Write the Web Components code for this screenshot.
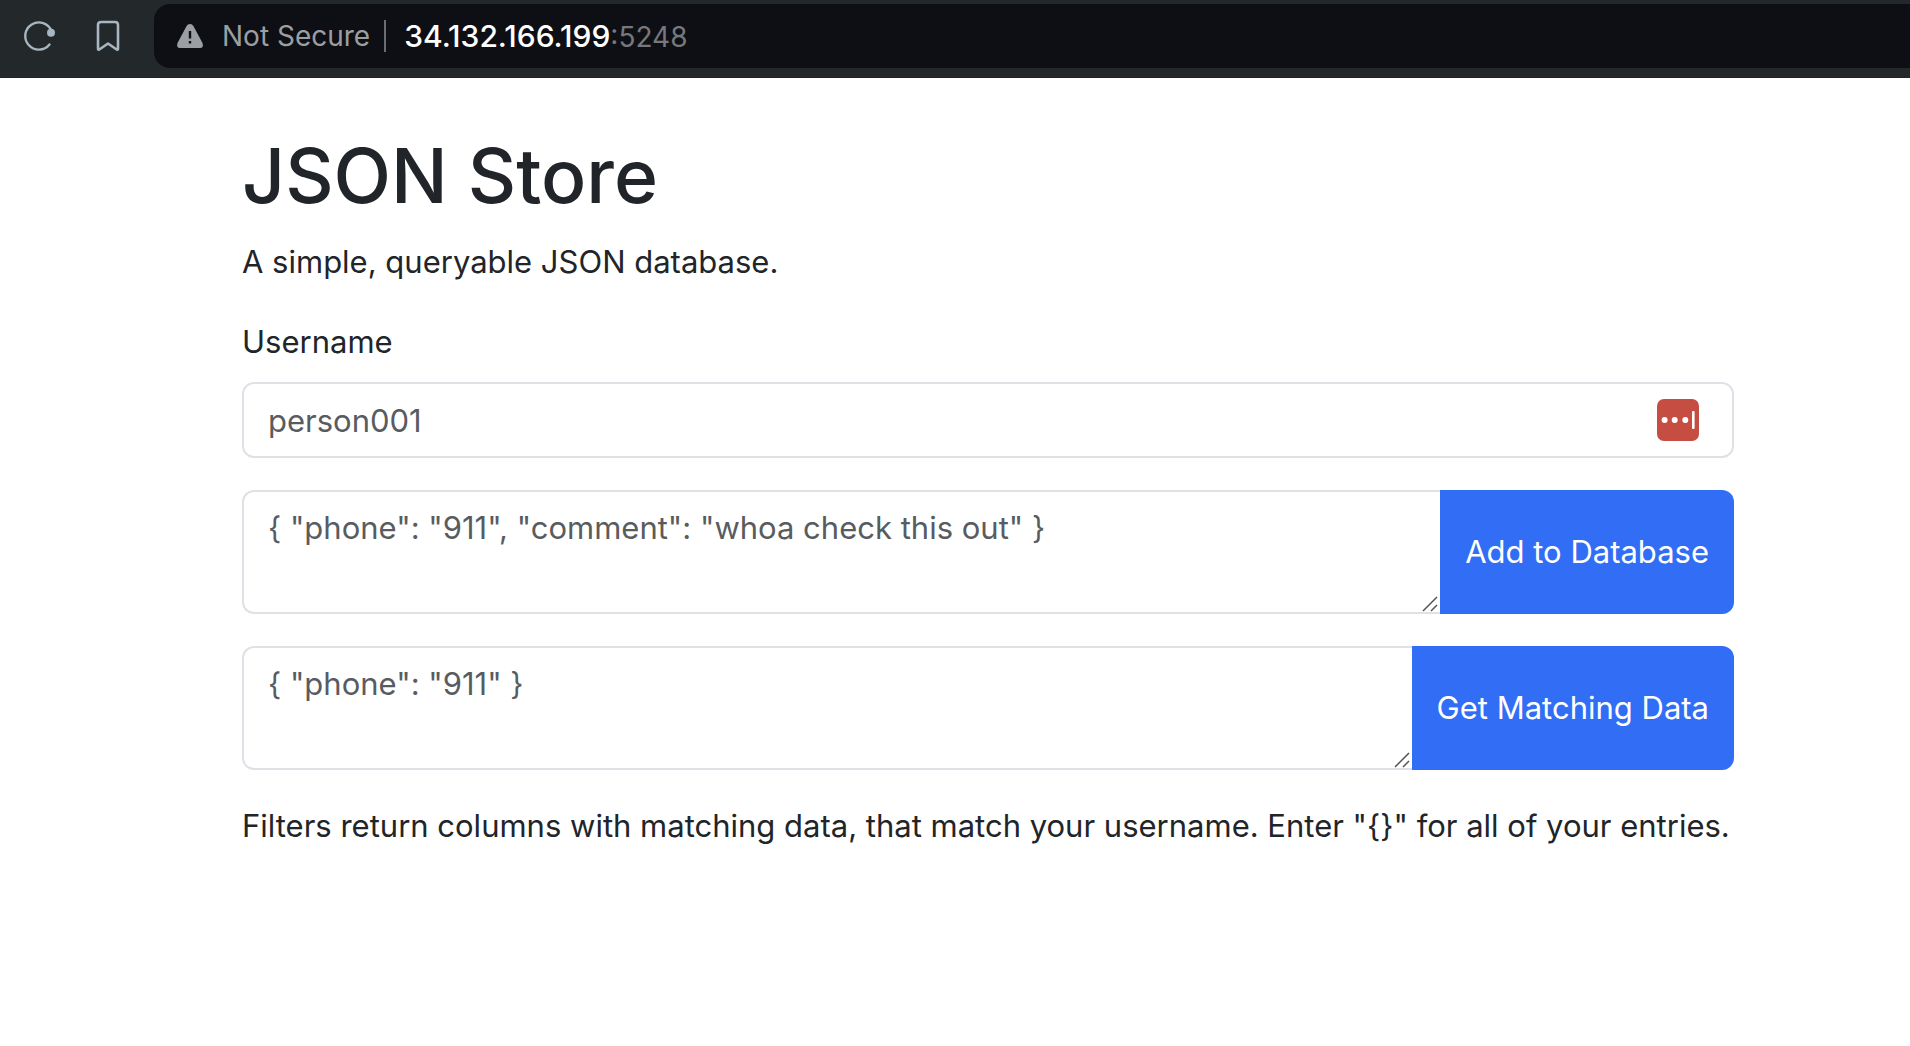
<!DOCTYPE html>
<html lang="en">
<head>
<meta charset="utf-8">
<title>JSON Store</title>
<style>
  body { margin: 0; background: #fff; color: #212529; font: 400 31px/48px Inter, "Liberation Sans", sans-serif; }
</style>
</head>
<body>
<browser-bar host="34.132.166.199" port=":5248"></browser-bar>
<json-store>
  <h1 slot="title">JSON Store</h1>
  <p slot="lead">A simple, queryable JSON database.</p>
  <user-field label="Username" placeholder="person001"></user-field>
  <json-form name="Data" action-label="Add to Database" placeholder='{ "phone": "911", "comment": "whoa check this out" }'></json-form>
  <json-form name="Filter" action-label="Get Matching Data" placeholder='{ "phone": "911" }'></json-form>
  <p slot="note">Filters return columns with matching data, that match your username. Enter "{}" for all of your entries.</p>
</json-store>
<script>
class BrowserBar extends HTMLElement {
  constructor() {
    super();
    this.attachShadow({ mode: "open" }).innerHTML = `
      <style>
        :host { display: flex; align-items: flex-start; box-sizing: border-box; height: 78px; padding-top: 4px; background: #23282b; border-bottom: 1px solid #1f2426; font-size: 28px; line-height: 64px; white-space: nowrap; }
        nav { display: flex; align-items: center; height: 64px; padding-left: 22px; gap: 36px; width: 132px; }
        button { display: block; border: 0; padding: 0; margin: 0; background: none; color: #a7b6c0; height: 36px; }
        svg { display: block; }
        .address { flex: 1; display: flex; align-items: center; height: 64px; padding-left: 20px; background: #0e0f14; border-radius: 16px 0 0 16px; color: #fff; }
        .state { display: flex; align-items: center; gap: 16px; color: #9b9fa2; }
        .rule { width: 2px; height: 32px; margin: 0 18px 0 14px; background: #6b6d71; }
        .url { display: flex; align-items: baseline; }
        .host { font-size: 30px; font-weight: 500; }
        .port { color: #77787c; }
      </style>
      <nav>
        <button aria-label="Reload"><svg width="36" height="36" viewBox="0 0 36 36" fill="none" stroke="currentColor" stroke-width="2.4" stroke-linecap="round"><path d="M27.5 26.5A13.6 13.6 0 1 1 29.500 13"/><circle cx="29" cy="14.800" r="4" fill="currentColor" stroke="none"/></svg></button>
        <button aria-label="Bookmark"><svg width="28" height="36" viewBox="0 0 28 36" fill="none" stroke="currentColor" stroke-width="2.6" stroke-linejoin="round"><path d="M7 4H21Q24 4 24 7V30.500Q24 32.500 22.300 31.300L14 25.500L5.700 31.300Q4 32.500 4 30.500V7Q4 4 7 4Z"/></svg></button>
      </nav>
      <div class="address">
        <span class="state"><svg width="32" height="32" viewBox="0 0 32 32"><path fill="currentColor" d="M16 4Q18.300 4 19.400 6L28.500 23Q30 28 26 28H6Q2 28 3.500 23L12.600 6Q13.700 4 16 4Z"/><path stroke="#0e0f14" stroke-width="2.400" d="M16 11V18.500M16 21V23.400"/></svg><span>Not Secure</span></span>
        <span class="rule"></span><span class="url"><span class="host"></span><span class="port"></span></span>
      </div>`;
    this.shadowRoot.querySelector(".host").textContent = this.getAttribute("host");
    this.shadowRoot.querySelector(".port").textContent = this.getAttribute("port");
  }
}

class JsonStore extends HTMLElement {
  constructor() {
    super();
    this.attachShadow({ mode: "open" }).innerHTML = `
      <style>
        :host { display: block; padding: 48px 176px 48px 242px; }
        main { display: flex; flex-direction: column; gap: 32px; }
        header { display: flex; flex-direction: column; gap: 12px; }
        ::slotted(h1) { margin: 0; font-size: 75px; line-height: 100px; font-weight: 500; }
        ::slotted(p) { margin: 0; }
      </style>
      <main>
        <header><slot name="title"></slot><slot name="lead"></slot></header>
        <slot></slot>
        <slot name="note"></slot>
      </main>`;
  }
}

class UserField extends HTMLElement {
  constructor() {
    super();
    this.attachShadow({ mode: "open" }).innerHTML = `
      <style>
        :host { display: flex; flex-direction: column; gap: 16px; }
        .box { position: relative; display: flex; }
        input { flex: 1; min-width: 0; box-sizing: border-box; height: 76px; margin: 0; padding: 12px 24px; border: 2px solid #dee2e6; border-radius: 12px; background: #fff; font: inherit; color: inherit; outline: 0; }
        input::placeholder { color: #595c5f; opacity: 1; }
        .vault { position: absolute; right: 35px; top: 17px; width: 42px; height: 42px; padding: 0; border: 0; background: none; }
        svg { display: block; }
      </style>
      <label for="user"></label>
      <div class="box">
        <input id="user" type="text">
        <button class="vault" aria-label="Fill from password manager"><svg width="42" height="42" viewBox="0 0 42 42"><rect width="42" height="42" rx="7" fill="#c64d42"/><g fill="#fff"><circle cx="7.600" cy="21" r="3"/><circle cx="17.700" cy="21" r="3"/><circle cx="28.300" cy="21" r="3"/><rect x="35" y="12" width="2.600" height="18" rx="1"/></g></svg></button>
      </div>`;
    this.shadowRoot.querySelector("label").textContent = this.getAttribute("label");
    this.shadowRoot.querySelector("input").placeholder = this.getAttribute("placeholder");
  }
}

class JsonForm extends HTMLElement {
  constructor() {
    super();
    this.attachShadow({ mode: "open" }).innerHTML = `
      <style>
        :host { display: flex; height: 124px; }
        .box { position: relative; flex: 1; display: flex; min-width: 0; }
        textarea { flex: 1; min-width: 0; box-sizing: border-box; margin: 0; padding: 12px 24px; border: 2px solid #dee2e6; border-right: 0; border-radius: 12px 0 0 12px; background: #fff; font: inherit; color: inherit; resize: none; outline: 0; overflow: hidden; }
        textarea::placeholder { color: #595c5f; opacity: 1; }
        svg { position: absolute; right: 2px; bottom: 2px; pointer-events: none; }
        button { margin: 0; padding: 0 25px; border: 0; border-radius: 0 12px 12px 0; background: #316df5; color: #fff; font: inherit; white-space: nowrap; }
      </style>
      <div class="box">
        <textarea></textarea>
        <svg width="16" height="16" viewBox="0 0 16 16" stroke="#555" stroke-width="1.500"><path d="M1 15L15 1M9 15L15 9"/></svg>
      </div>
      <button></button>`;
    const area = this.shadowRoot.querySelector("textarea");
    area.placeholder = this.getAttribute("placeholder");
    area.setAttribute("aria-label", this.getAttribute("name"));
    this.shadowRoot.querySelector("button").textContent = this.getAttribute("action-label");
  }
}

customElements.define("browser-bar", BrowserBar);
customElements.define("json-store", JsonStore);
customElements.define("user-field", UserField);
customElements.define("json-form", JsonForm);
</script>
</body>
</html>
